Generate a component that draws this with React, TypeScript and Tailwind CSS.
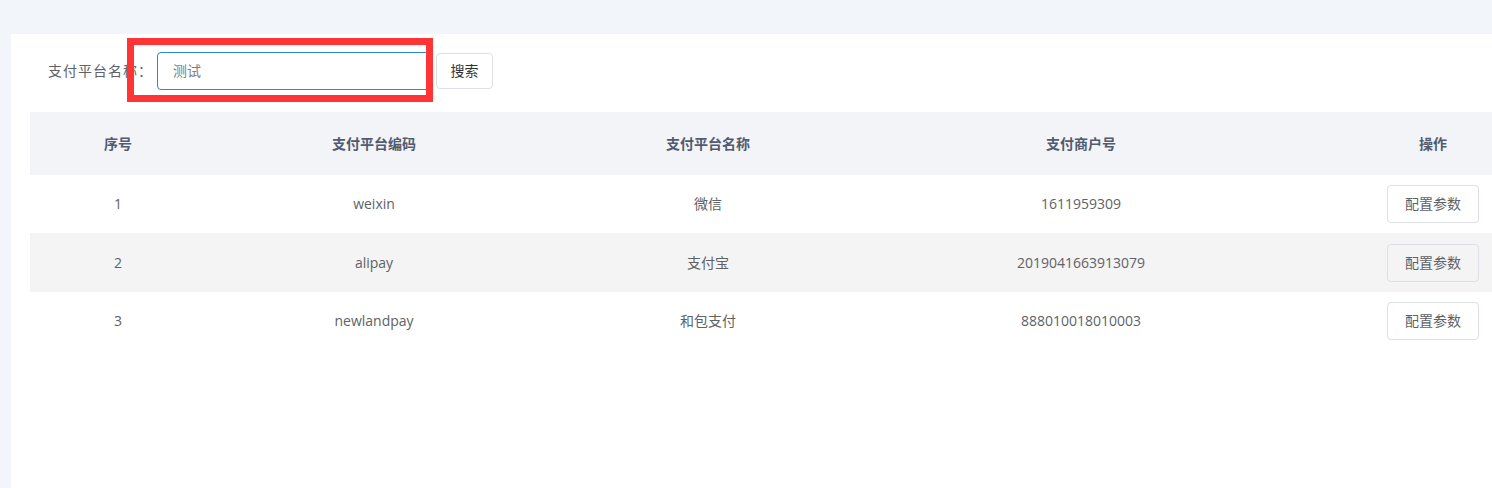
import React from "react";

interface PayPlatform {
  index: number;
  code: string;
  name: string;
  merchantNo: string;
}

const PLATFORMS: PayPlatform[] = [
  { index: 1, code: "weixin", name: "微信", merchantNo: "1611959309" },
  { index: 2, code: "alipay", name: "支付宝", merchantNo: "2019041663913079" },
  { index: 3, code: "newlandpay", name: "和包支付", merchantNo: "888010018010003" },
];

const font = "font-['Open_Sans','Noto_Sans_CJK_SC',sans-serif]";

export default function App() {
  return (
    <div className={`h-[488px] w-[1492px] overflow-hidden bg-[#f2f5fa] pt-[34px] pl-[11px] ${font}`}>
      <div className="relative h-full w-[1600px] bg-white pl-[19px]">
        {/* search bar */}
        <div className="flex items-center pt-[18px] pl-[18px] text-sm">
          <span className="w-[109px] tracking-[1px] text-[#606266]">支付平台名称：</span>
          <div className="flex h-[38px] w-[273px] items-center rounded-[4px] border border-[#2d87d2] px-[15px] text-[#7a7d82]">
            测试
          </div>
          <button className="ml-[6px] h-[36px] w-[57px] rounded-[4px] border border-[#dcdfe6] bg-white text-[#333]">
            搜索
          </button>
        </div>

        {/* highlight overlay */}
        <div className="absolute top-[4px] left-[116px] h-[64px] w-[306px] border-[7px] border-[#ff3535]" />

        {/* table */}
        <table className="mt-[22px] w-[1548px] table-fixed border-collapse text-sm">
          <colgroup>
            <col className="w-[176px]" />
            <col className="w-[336px]" />
            <col className="w-[332px]" />
            <col className="w-[414px]" />
            <col className="w-[290px]" />
          </colgroup>
          <thead>
            <tr className="h-[63px] bg-[#f2f4f8] font-bold text-[#515a6e]">
              <th>序号</th>
              <th>支付平台编码</th>
              <th>支付平台名称</th>
              <th>支付商户号</th>
              <th>操作</th>
            </tr>
          </thead>
          <tbody className="text-[#606266]">
            {PLATFORMS.map((p, i) => (
              <tr
                key={p.index}
                className={`text-center ${i === 1 ? "h-[59px] bg-[#f4f4f5]" : "h-[58px] bg-white"}`}
              >
                <td>{p.index}</td>
                <td>{p.code}</td>
                <td>{p.name}</td>
                <td>{p.merchantNo}</td>
                <td>
                  <button
                    className={`h-[38px] w-[92px] rounded-[4px] border border-[#dcdfe6] text-[#606266] ${
                      i === 1 ? "bg-[#f4f4f5]" : "bg-white"
                    }`}
                  >
                    配置参数
                  </button>
                </td>
              </tr>
            ))}
          </tbody>
        </table>
      </div>
    </div>
  );
}
